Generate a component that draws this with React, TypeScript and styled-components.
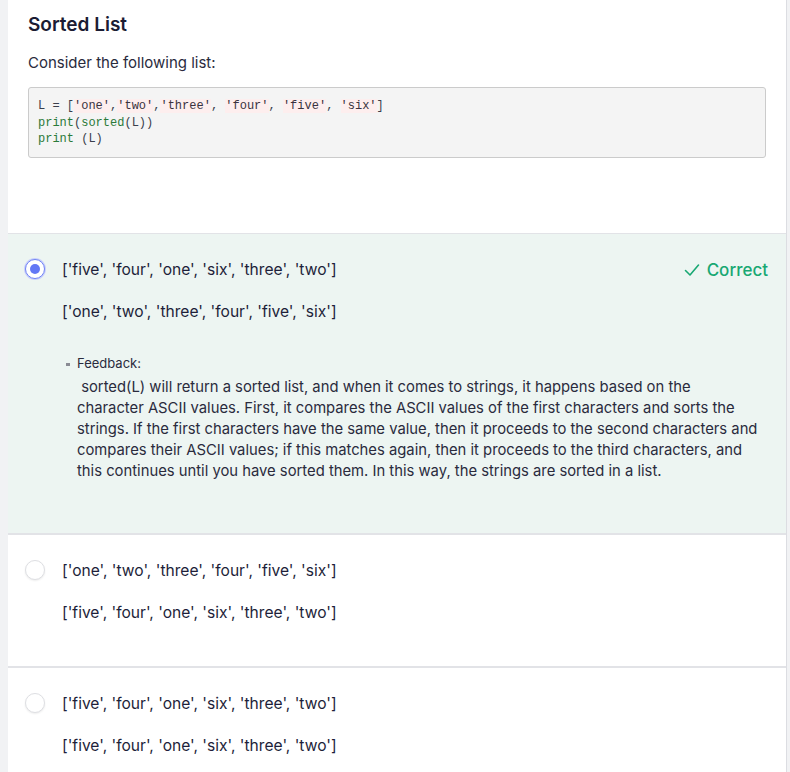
import React from "react";
import styled, { createGlobalStyle } from "styled-components";

const Global = createGlobalStyle`
  html, body { margin: 0; padding: 0; background: #f1f2f4; }
  body { font-family: Inter, "Noto Sans", sans-serif; color: #1e1f36; }
  * { box-sizing: border-box; }
`;

const Page = styled.div`
  padding: 0 3px 0 8px;
  height: 772px;
  overflow: hidden;
`;

const Card = styled.div`
  background: #ffffff;
  border-right: 1px solid #dcdde2;
  min-height: 772px;
`;

const Header = styled.section`
  height: 234px;
  padding: 14px 20px 0 20px;
  border-bottom: 1px solid #e2e3e7;
`;

const Title = styled.h2`
  margin: 0;
  font-size: 19px;
  line-height: 22px;
  font-weight: 600;
  color: #1b1c33;
`;

const Prompt = styled.p`
  margin: 17px 0 0 0;
  font-size: 15px;
  line-height: 20px;
  color: #2a2b3d;
`;

const CodeBlock = styled.pre`
  margin: 14px 0 0 0;
  padding: 10px 9px 9px 9px;
  background: #f4f4f4;
  border: 1px solid #cbcbcb;
  border-radius: 3px;
  font-family: "Liberation Mono", "DejaVu Sans Mono", monospace;
  font-size: 12px;
  line-height: 16.5px;
  color: #3b3f4c;
`;

const Fn = styled.span`
  color: #2b7a3a;
`;

const Str = styled.span`
  background: #fdeeee;
  color: #3a3340;
`;

const Option = styled.section<{ $selected?: boolean; $last?: boolean }>`
  display: flex;
  align-items: flex-start;
  gap: 17px;
  padding: 25px 18px 42px 17px;
  background: ${(p) => (p.$selected ? "#edf5f2" : "#ffffff")};
  border-bottom: ${(p) => (p.$last ? "none" : "2px solid #e2e3e7")};
`;

const Radio = styled.span<{ $checked?: boolean }>`
  flex: none;
  width: 20px;
  height: 20px;
  border-radius: 50%;
  display: flex;
  align-items: center;
  justify-content: center;
  background: #ffffff;
  border: 1px solid ${(p) => (p.$checked ? "#7083f4" : "#dedfe3")};
  box-shadow: ${(p) =>
    p.$checked ? "0 0 0 1px #c9d0fb" : "0 1px 2px rgba(0,0,0,0.08)"};
  &::after {
    content: "";
    width: 10px;
    height: 10px;
    border-radius: 50%;
    background: #6277f5;
    display: ${(p) => (p.$checked ? "block" : "none")};
  }
`;

const Body = styled.div`
  flex: 1;
  display: flex;
  flex-direction: column;
  gap: 20px;
`;

const HeadRow = styled.div`
  display: flex;
  justify-content: space-between;
  align-items: center;
`;

const AnswerLine = styled.div`
  font-size: 15.6px;
  line-height: 22px;
  color: #1e1f3a;
`;

const Verdict = styled.div`
  display: flex;
  align-items: center;
  gap: 7px;
  font-size: 17px;
  line-height: 22px;
  font-weight: 500;
  color: #19a873;
  svg {
    display: block;
  }
`;

const Feedback = styled.div`
  margin-top: 11px;
  padding: 0 8px 9px 0;
  display: flex;
  flex-direction: column;
  gap: 5px;
`;

const FeedbackLabel = styled.div`
  position: relative;
  padding-left: 15px;
  font-size: 13px;
  line-height: 18px;
  color: #2a2b3d;
  &::before {
    content: "";
    position: absolute;
    left: 4px;
    top: 9px;
    width: 4px;
    height: 3px;
    background: #8a8b94;
  }
`;

const FeedbackText = styled.p`
  margin: 0;
  padding-left: 15px;
  font-size: 14.8px;
  line-height: 21px;
  color: #2a2b3d;
  white-space: pre-wrap;
`;

const Check = () => (
  <svg width="16" height="14" viewBox="0 0 16 14" fill="none">
    <path d="M1.5 7.5 L6 12 L14.5 2" stroke="#19a873" strokeWidth="1.6" strokeLinecap="round" strokeLinejoin="round" />
  </svg>
);

export default function App() {
  return (
    <>
      <Global />
      <Page>
        <Card>
          <Header>
            <Title>Sorted List</Title>
            <Prompt>Consider the following list:</Prompt>
            <CodeBlock>
              L = [<Str>'one'</Str>,<Str>'two'</Str>,<Str>'three'</Str>, <Str>'four'</Str>, <Str>'five'</Str>, <Str>'six'</Str>]
              {"\n"}
              <Fn>print</Fn>(<Fn>sorted</Fn>(L))
              {"\n"}
              <Fn>print</Fn> (L)
            </CodeBlock>
          </Header>

          <Option $selected>
            <Radio $checked />
            <Body>
              <HeadRow>
                <AnswerLine>['five', 'four', 'one', 'six', 'three', 'two']</AnswerLine>
                <Verdict>
                  <Check />
                  Correct
                </Verdict>
              </HeadRow>
              <AnswerLine>['one', 'two', 'three', 'four', 'five', 'six']</AnswerLine>
              <Feedback>
                <FeedbackLabel>Feedback:</FeedbackLabel>
                <FeedbackText>
                  {" sorted(L) will return a sorted list, and when it comes to strings, it happens based on the character ASCII values. First, it compares the ASCII values of the first characters and sorts the strings. If the first characters have the same value, then it proceeds to the second characters and compares their ASCII values; if this matches again, then it proceeds to the third characters, and this continues until you have sorted them. In this way, the strings are sorted in a list."}
                </FeedbackText>
              </Feedback>
            </Body>
          </Option>

          <Option>
            <Radio />
            <Body>
              <AnswerLine>['one', 'two', 'three', 'four', 'five', 'six']</AnswerLine>
              <AnswerLine>['five', 'four', 'one', 'six', 'three', 'two']</AnswerLine>
            </Body>
          </Option>

          <Option $last>
            <Radio />
            <Body>
              <AnswerLine>['five', 'four', 'one', 'six', 'three', 'two']</AnswerLine>
              <AnswerLine>['five', 'four', 'one', 'six', 'three', 'two']</AnswerLine>
            </Body>
          </Option>
        </Card>
      </Page>
    </>
  );
}
